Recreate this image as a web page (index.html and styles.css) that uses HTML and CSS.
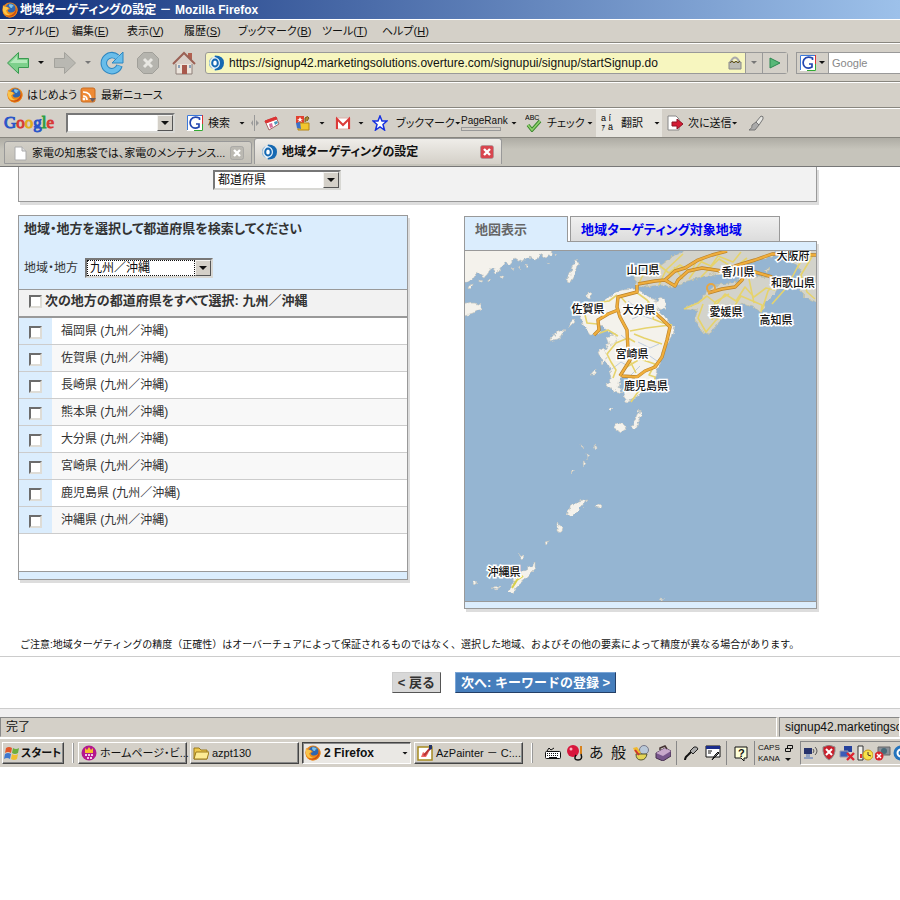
FILE: index.html
```html
<!DOCTYPE html>
<html lang="ja">
<head>
    <meta charset="UTF-8">
    <meta name="viewport" content="width=device-width, initial-scale=1.0">
    <title>地域ターゲティングの設定 - Mozilla Firefox</title>
    <link rel="stylesheet" href="styles.css">
</head>
<body>
    <svg class="defs" width="0" height="0">
        <symbol id="firefox" viewBox="0 0 16 16">
            <circle cx="8" cy="8" r="7.5" fill="#e8861c"/>
            <circle cx="8.500" cy="6.500" r="5" fill="#2f66b0"/>
            <path d="M7 2.500q3-1 5 1.500q-2 0-2 2q-3 0-3-3.500" fill="#7fc3e8"/>
            <path d="M1 3l2 1.500l3 .5l2 2-2.500 1 1 2q3 1.500 6.500-1q2-3 .5-6.500q2.500 3 2 6.500q-2 6.500-8 6.500q-7-1-7-8z" fill="#ef8a17"/>
            <path d="M1 4q2 1 4 1l1.500 1.500-2.500 2q1 4 5 4.500q-6 1.500-8-4z" fill="#f9c44a"/>
            <path d="M14 5q2 6-3 9q-5 2-8-1q6 2 9-2q2-3 2-6" fill="#c94d14"/>
        </symbol>
        <symbol id="overture" viewBox="0 0 16 16">
            <ellipse cx="7" cy="8" rx="5.500" ry="7" fill="#e4f0fa"/>
            <path d="M6 .5q9 0 9 7.500t-9 7.500q-1-1 0-1.500q5-1.500 5-6T6 2q-1-.5 0-1.500" fill="#1669b2"/>
            <ellipse cx="6" cy="8" rx="2.800" ry="3.500" fill="#fff" stroke="#1669b2" stroke-width="2"/>
            <path d="M3 2.500Q0 5 0 8t3 5.500" fill="none" stroke="#8fb8dc"/>
        </symbol>
        <symbol id="google-g" viewBox="0 0 16 16">
            <path d="M0 0h16v16H0z" fill="#fff"/>
            <path d="M.5 15V.5H15" fill="none" stroke="#3c78d8"/>
            <path d="M15.500 0v9" stroke="#d33"/>
            <path d="M15.500 9v6.500H7" fill="none" stroke="#3a3"/>
            <path d="M12.500 5V3q-6-2.500-8.500 1.500q-2 4 .5 7q3 3 7.500.5V9H9" fill="none" stroke="#2346b0" stroke-width="1.700"/>
        </symbol>
        <symbol id="closex" viewBox="0 0 14 14">
            <rect x=".5" y=".5" width="13" height="13" rx="2" fill="currentColor" stroke="#999" stroke-opacity=".6"/>
            <path d="M4 4l6 6M10 4l-6 6" stroke="#fff" stroke-width="2.400"/>
        </symbol>
    </svg>

    <header class="titlebar">
        <svg class="icon"><use href="#firefox"/></svg>
        <span>地域ターゲティングの設定 － Mozilla Firefox</span>
    </header>

    <nav class="menubar">
        <a href="#">ファイル(<u>F</u>)</a>
        <a href="#">編集(<u>E</u>)</a>
        <a href="#">表示(<u>V</u>)</a>
        <a href="#">履歴(<u>S</u>)</a>
        <a href="#">ブックマーク(<u>B</u>)</a>
        <a href="#">ツール(<u>T</u>)</a>
        <a href="#">ヘルプ(<u>H</u>)</a>
    </nav>

    <div class="navbar">
        <button class="plain" aria-label="戻る">
            <svg width="24" height="24" viewBox="0 0 24 24"><path d="M1.500 12L12.500 1.500v6h10v9h-10v6z" fill="#7ed08c" stroke="#3a9a50"/><path d="M4 12l7-7v4h10v3z" fill="#b5e9bb"/></svg>
        </button>
        <i class="arrow"></i>
        <button class="plain" aria-label="進む">
            <svg width="24" height="24" viewBox="0 0 24 24"><path d="M22.500 12L11.500 1.500v6h-10v9h10v6z" fill="#b9b8b2" stroke="#a3a29c"/></svg>
        </button>
        <i class="arrow dim"></i>
        <button class="plain" aria-label="更新">
            <svg width="24" height="24" viewBox="0 0 24 24"><path d="M19.500 14.500A8 8 0 1 1 17 6" fill="none" stroke="#2d86c0" stroke-width="6.500"/><path d="M23 1v11H12z" fill="#69bdea" stroke="#2d86c0"/><path d="M19.300 15A8 8 0 1 1 17.500 6.500" fill="none" stroke="#69bdea" stroke-width="4.500"/></svg>
        </button>
        <button class="plain" aria-label="中止">
            <svg width="24" height="24" viewBox="0 0 24 24"><path d="M7.500 1.500h9l6 6v9l-6 6h-9l-6-6v-9z" fill="#b5b4ae" stroke="#a09f99"/><path d="M8 8l8 8M16 8l-8 8" stroke="#e8e7e2" stroke-width="3"/></svg>
        </button>
        <button class="plain" aria-label="ホーム">
            <svg width="24" height="24" viewBox="0 0 24 24"><path d="M4 11h16v12H4z" fill="#ece4dc" stroke="#8d7f78"/><path d="M16 2h4v7h-4z" fill="#b06050"/><path d="M1 13L12 2l11 11" fill="#d9cfc8" stroke="#9b6155" stroke-width="2"/><path d="M10 14h5v9h-5z" fill="#a8584c"/><path d="M6 14h2v3H6zM17 14h2v3h-2z" fill="#8aa0b8"/></svg>
        </button>
        <div class="urlbar">
            <svg class="icon"><use href="#overture"/></svg>
            <input type="text" aria-label="アドレス" value="https://signup42.marketingsolutions.overture.com/signupui/signup/startSignup.do">
            <svg width="14" height="14" viewBox="0 0 14 14"><path d="M3 8V5q4-7 8 0v3" fill="none" stroke="#aaa" stroke-width="2"/><path d="M1 6h12v7H1z" fill="#bcbcb4" stroke="#888"/><path d="M2 7l2-2 2 2 2-2 2 2 2-2" fill="none" stroke="#665a20"/></svg>
            <button class="urldrop" aria-label="履歴"><i class="arrow dim"></i></button>
            <button class="go" aria-label="移動"><svg width="12" height="12" viewBox="0 0 12 12"><path d="M1 1l10 5-10 5z" fill="#58b878" stroke="#2d8850"/></svg></button>
        </div>
        <div class="search">
            <button class="engine" aria-label="検索エンジン"><svg class="icon"><use href="#google-g"/></svg><i class="arrow"></i></button>
            <input type="text" aria-label="検索" placeholder="Google">
        </div>
    </div>

    <div class="bookmarks">
        <svg class="icon"><use href="#firefox"/></svg>
        <a href="#">はじめよう</a>
        <svg class="icon" viewBox="0 0 16 16"><rect x="1" y="1" width="14" height="14" rx="2" fill="#ee8a35" stroke="#c96c22"/><path d="M3 5q8 0 8 8M3 9q4 0 4 4" fill="none" stroke="#fff" stroke-width="1.700"/><circle cx="4" cy="12" r="1.400" fill="#fff"/><path d="M9 11h7l-3.500 4z" fill="#6a5c60"/></svg>
        <a href="#">最新ニュース</a>
    </div>

    <div class="gtoolbar">
        <span class="glogo"><b class="gb">G</b><b class="gr">o</b><b class="gy">o</b><b class="gb">g</b><b class="gg">l</b><b class="gr">e</b></span>
        <div class="combo gcombo"><input type="text" aria-label="Google 検索"><span class="knob"><i class="arrow"></i></span></div>
        <svg class="icon"><use href="#google-g"/></svg>
        <span>検索</span>
        <i class="arrow"></i>
        <svg width="8" height="16" viewBox="0 0 8 16"><path d="M3.500 0v16" stroke="#999"/><path d="M2 5v6L0 8zM5 5v6l3-3z" fill="#999"/></svg>
        <svg class="icon" viewBox="0 0 16 16"><path d="M1 6l11-4 3 7-10 6z" fill="#fff" stroke="#a66"/><path d="M1 6l11-4 1 2-11 4z" fill="#d33" stroke="#d33"/><path d="M5 9l3-1 1 4-3 1z" fill="#d86b9a"/><path d="M10 7l3-1 1 2-3 2z" fill="#49b"/></svg>
        <svg class="icon" viewBox="0 0 16 16"><path d="M1 1h8v7H1z" fill="#e2412f"/><path d="M3 8h11v7H3z" fill="#f1c62e" stroke="#b68615"/><path d="M1 8l4-1 1 7-4-1z" fill="#3b70c8"/><path d="M5 2l1 2h2l-2 1 1 2-2-1-2 1 1-2-2-1h2z" fill="#fff"/><path d="M10 7V3q3-3 4 0l-2 3" fill="#ad8c32" stroke="#75581e"/></svg>
        <i class="arrow"></i>
        <svg class="icon" viewBox="0 0 16 16"><path d="M1 3h14v11H1z" fill="#fff" stroke="#ddb0a8"/><path d="M2 14V4l6 6 6-6v10" fill="none" stroke="#dc3a38" stroke-width="2"/></svg>
        <i class="arrow"></i>
        <svg class="icon" viewBox="0 0 16 16"><path d="M8 1l2 5h5l-4 3.500 1.500 5.500L8 12l-4.500 3L5 9.500 1 6h5z" fill="#fff" stroke="#1530e0" stroke-width="1.500"/></svg>
        <span class="withdrop">ブックマーク<i class="arrow"></i></span>
        <span class="pagerank">PageRank<i></i></span>
        <i class="arrow"></i>
        <svg width="18" height="18" viewBox="0 0 18 18"><text x="0" y="6" font-size="7">ABC</text><path d="M3 11l4 5 8-9" fill="none" stroke="#39862c" stroke-width="3.500"/><path d="M3 11l4 5 8-9" fill="none" stroke="#8fd16c" stroke-width="1.700"/></svg>
        <span>チェック</span>
        <i class="arrow"></i>
        <button class="plain translate">
            <svg width="18" height="20" viewBox="0 0 18 20"><text x="1" y="8" font-size="9">a í</text><text x="1" y="17" font-size="9">ｧ ä</text></svg>
            翻訳<i class="arrow"></i>
        </button>
        <svg class="icon" viewBox="0 0 16 16"><path d="M1 1h8l3 3v11H1z" fill="#fff" stroke="#888"/><path d="M5 7h5V4l6 5-6 5v-3H5z" fill="#d41c35" stroke="#8e1426"/></svg>
        <span class="withdrop">次に送信<i class="arrow"></i></span>
        <svg class="icon" viewBox="0 0 16 16"><path d="M8 7l5-6q3 0 2 3l-4 6z" fill="#e6e6e2" stroke="#777"/><path d="M8 7l3 3-4 5H1q4-2 3-5z" fill="#aaa" stroke="#777"/></svg>
    </div>

    <div class="tabs">
        <div class="tab">
            <svg class="icon" viewBox="0 0 16 16"><path d="M3 2h7l4 4v9H3z" fill="#fff" stroke="#aaa"/><path d="M10 2v4h4" fill="#ddd" stroke="#aaa"/></svg>
            <a href="#">家電の知恵袋では、家電のメンテナンス...</a>
            <button class="plain close" aria-label="閉じる"><svg width="14" height="14"><use href="#closex"/></svg></button>
        </div>
        <div class="tab active">
            <svg class="icon"><use href="#overture"/></svg>
            <a href="#">地域ターゲティングの設定</a>
            <button class="plain close" aria-label="閉じる"><svg width="14" height="14"><use href="#closex"/></svg></button>
        </div>
    </div>

    <main class="page">
        <div class="content">
            <section class="box unit">
                <div class="combo wide">
                    <select aria-label="単位"><option>都道府県</option></select><span class="knob"><i class="arrow"></i></span>
                </div>
            </section>

            <div class="columns">
                <section class="box picker">
                    <div class="picker-head">
                        <h2>地域・地方を選択して都道府県を検索してください</h2>
                        <div class="field">
                            <label for="region">地域・地方</label>
                            <div class="combo wide focused">
                                <select id="region"><option>九州／沖縄</option></select><span class="knob"><i class="arrow"></i></span>
                            </div>
                        </div>
                    </div>
                    <div class="select-all">
                        <input type="checkbox" id="all">
                        <label for="all">次の地方の都道府県をすべて選択: 九州／沖縄</label>
                    </div>
                    <table class="prefs">
                        <tr><td><input type="checkbox" id="p1"></td><td><label for="p1">福岡県 (九州／沖縄)</label></td></tr>
                        <tr><td><input type="checkbox" id="p2"></td><td><label for="p2">佐賀県 (九州／沖縄)</label></td></tr>
                        <tr><td><input type="checkbox" id="p3"></td><td><label for="p3">長崎県 (九州／沖縄)</label></td></tr>
                        <tr><td><input type="checkbox" id="p4"></td><td><label for="p4">熊本県 (九州／沖縄)</label></td></tr>
                        <tr><td><input type="checkbox" id="p5"></td><td><label for="p5">大分県 (九州／沖縄)</label></td></tr>
                        <tr><td><input type="checkbox" id="p6"></td><td><label for="p6">宮崎県 (九州／沖縄)</label></td></tr>
                        <tr><td><input type="checkbox" id="p7"></td><td><label for="p7">鹿児島県 (九州／沖縄)</label></td></tr>
                        <tr><td><input type="checkbox" id="p8"></td><td><label for="p8">沖縄県 (九州／沖縄)</label></td></tr>
                    </table>
                    <div class="picker-foot"></div>
                </section>

                <section class="mapcol">
                    <div class="maptabs">
                        <a href="#" class="maptab current">地図表示</a>
                        <a href="#" class="maptab">地域ターゲティング対象地域</a>
                    </div>
                    <div class="box mapbox">
                        <svg class="map" viewBox="0 0 351 350">
                            <defs>
                                <filter id="coast" filterUnits="userSpaceOnUse" x="-5" y="-5" width="365" height="365" color-interpolation-filters="sRGB">
                                    <feTurbulence type="fractalNoise" baseFrequency=".2" numOctaves="2" seed="4"/>
                                    <feDisplacementMap in="SourceGraphic" scale="6" xChannelSelector="R" yChannelSelector="G"/>
                                </filter>
                            </defs>
                            <!-- land -->
                            <g fill="#f4f2ec" stroke="#c9c6bb" stroke-width=".6" filter="url(#coast)">
                                <path d="M-3-3H87L86 3 81 7 76 4 70 9 64 5 57 11 50 7 44 14 40 12 32 23 27 16 20 26 13 21 8 29-3 32z"/>
                                <path d="M90 3l3 1-2 2zM60 14l3 1-2 2zM46 17l3-1-1 3zM35 25l3 0-2 3zM24 28l2 1-2 2zM14 29l3 1-3 2zM4 35l4-1-3 3zM82 11l3 1-2 1zM54 15l2 1-1 2z"/>
                                <path d="M-3 54L8 52 17 54 14 59 7 63-3 66z"/>
                                <path d="M110 9l4 2-3 10-6 10-4-1 4-9z"/>
                                <path d="M172 38L183 46 192 50 192 58 197 63 203 71 210 76 207 86 200 96 195 109 192 122 190 129 181 136 173 146 162 151 158 146 165 135 163 127 156 126 154 137 158 142 147 140 142 134 147 126 143 112 136 103 143 93 153 89 147 83 139 77 134 72 136 83 124 83 119 76 116 66 116 56 130 52 143 49 150 42 157 39z"/>
                                <path d="M142 86l8-3 3 6-8 5zM133 100l5-3 5 8-5 8z"/>
                                <circle cx="196" cy="53" r="5.500"/>
                                <path d="M91 82l10-5-6 10-10 3zM104 72l4-4 2 3-5 5z"/>
                                <path d="M122 42l4 1-1 4-3-1zM125 124l6-7-1 7z"/>
                                <path d="M174 159l3 5-6 13-4-1 4-10z"/>
                                <path d="M148 177l4-5 7 1 2 5-6 4z"/>
                                <path d="M123 248l-7 8-9 9-5-1 4-10 8-4z"/>
                                <path d="M133 253l3 1-2 4-3-2zM92 272l5 4-1 6-4-2zM79 291l6-1-5 4z"/>
                                <path d="M70 312v6l-9 9-7 6-6 10-5-2 7-14z"/>
                                <path d="M8 330l6 1-4 3zM27 337l9-1-5 3zM54 305l4-2-1 6z"/>
                                <path d="M129 194l3 2-1 3zM122 203l3 2-2 4zM117 211l3 1-2 3zM107 219l3 1-3 3zM144 158l5-1-3 3zM116 193l2 1-1 2zM194 347l4 1-3 1z"/>
                            </g>
                            <g fill="#d3d3cb" stroke="#c6c1a0" stroke-width=".7" filter="url(#coast)">
                                <path d="M170 34L171 24 182 17 195 14 205 7 222-3H314L306 6 290 10 280 14 270 20 255 23 235 27 222 30 210 36 195 34 180 36z"/>
                                <path d="M354-3V52L342 47 335 40 332 32 336 18 325 8 320-3z"/>
                                <path d="M240 42L250 34 273 31 280 24 307 26 317 32 310 42 300 52 297 62 287 56 277 52 267 59 253 72 245 84 235 79 230 69 232 59 220 57 237 49z"/>
                                <path d="M299 20l5-4-1 6zM260 24l8-2-4 4zM245 22l5-1-2 3z"/>
                            </g>
                            <!-- rivers -->
                            <g fill="none" stroke="#a8bcd8" stroke-width=".7">
                                <path d="M163 50q8 8 18 7M167 68l9-4 11 4M173 91l12 6 9-4M170 108l12-5 10 7M147 118l9-7 5 3M166 124l9-9M156 84l7 6"/>
                            </g>
                            <!-- minor roads -->
                            <g fill="none" stroke="#e6d36c" stroke-width="1.600" stroke-linejoin="round">
                                <path d="M155 45l8 9M171 41l11 8 8 10-2 9 10 4 9 2M165 80l16-3 24-3M169 83l10 4 18 6M170 91l-7-4-12 5-9 11 4 8 5 8-3 8M160 117l15-9 15 5-6 11 6 2-1 8-14 4-9 13M116 57l13-5 15-2 8-6M119 60l3 12 10 1M135 82l8-3 10 6M184 50l-9 14-14-3M165 110l6 12"/>
                                <path d="M174 32l7-14 14-3 9 7 11-8 11 7 6-12 14 6 7-10 15 6 8-10M194 34l7-15 17-16M224 28l14-20M236 26l18-18 20 12M253 22l15-4 14-11M218 28l-9-12"/>
                                <path d="M219 58l14-6 9-7 10 8 8-10 11 7 9-14 9 10 12-9 9 2M238 53l-5 14 8 14 10-12 16-10 9-14 21 9-1 7M247 69l3-18 14-8M284 28l5 24M297 59l6-19 8-9M341 2l-9 15-10 19-15 17M348 4l-12 20 6 17 8 7"/>
                            </g>
                            <!-- expressways -->
                            <g fill="none" stroke="#b9822b" stroke-width="3.400" stroke-linejoin="round">
                                <path d="M173 33L190 30 200 29 210 20 220 17 233 9 247 4 262 0M200 29L210 35 213 29 223 20 237 17 257 20 270 15 290 9 307 3 351 4M172 34V41L153 46 152 56 155 66 162 79 163 99 165 109 155 125M153 59L143 63 133 69 134 79 129 84M188 60L198 69 205 76 202 89 197 106 190 116 180 120 172 126 157 125M243 42L257 38 270 36 277 29 280 22 290 21 307 26"/>
                            </g>
                            <g fill="none" stroke="#f0ae3c" stroke-width="2.200" stroke-linejoin="round">
                                <path d="M173 33L190 30 200 29 210 20 220 17 233 9 247 4 262 0M200 29L210 35 213 29 223 20 237 17 257 20 270 15 290 9 307 3 351 4M172 34V41L153 46 152 56 155 66 162 79 163 99 165 109 155 125M153 59L143 63 133 69 134 79 129 84M188 60L198 69 205 76 202 89 197 106 190 116 180 120 172 126 157 125M243 42L257 38 270 36 277 29 280 22 290 21 307 26"/>
                            </g>
                            <circle cx="246" cy="37" r="4" fill="none" stroke="#e8a641" stroke-width="2"/>
                            <path d="M47 337l5-8 6-4" fill="none" stroke="#d8d04c" stroke-width="2"/>
                            <g class="maplabels">
                                <text x="328" y="9">大阪府</text>
                                <text x="178" y="23">山口県</text>
                                <text x="273" y="25">香川県</text>
                                <text x="328" y="36">和歌山県</text>
                                <text x="123" y="62">佐賀県</text>
                                <text x="174" y="63">大分県</text>
                                <text x="261" y="65">愛媛県</text>
                                <text x="311" y="73">高知県</text>
                                <text x="167" y="107">宮崎県</text>
                                <text x="181" y="139">鹿児島県</text>
                                <text x="39" y="325">沖縄県</text>
                            </g>
                        </svg>
                    </div>
                </section>
            </div>
            <p class="note">ご注意:地域ターゲティングの精度（正確性）はオーバーチュアによって保証されるものではなく、選択した地域、およびその他の要素によって精度が異なる場合があります。</p>
        </div>
        <div class="actions">
            <button class="back">&lt; 戻る</button>
            <button class="next">次へ: キーワードの登録 &gt;</button>
        </div>
    </main>

    <footer class="statusbar">
        <span>完了</span>
        <span>signup42.marketingsolutions.overture.com</span>
    </footer>

    <div class="taskbar">
        <button class="task start">
            <svg class="icon" viewBox="0 0 16 16"><path d="M2 3q3-2 6 0L7 8q-3-2-6 0z" fill="#e2572b"/><path d="M9 3q3 2 6 0l-1 5q-3 2-6 0z" fill="#6cae3e"/><path d="M1 9q3-2 6 0l-1 5q-3-2-6 0z" fill="#3f78cf"/><path d="M8 9q3 2 6 0l-1 5q-3 2-6 0z" fill="#f0bf30"/></svg>
            スタート
        </button>
        <i class="grip"></i>
        <button class="task">
            <svg class="icon" viewBox="0 0 16 16"><circle cx="8" cy="8" r="7.500" fill="#b5178e"/><path d="M4 3l2 2 2-3 2 3 2-2v5H4z" fill="#f6bf2d"/><path d="M4 9h2v2H4zM7 9h2v2H7zM10 9h2v2h-2zM6 12h2v2H6zM9 12h2v2H9z" fill="#f3c8ea"/></svg>
            <span>ホームページ・ビ...</span>
        </button>
        <button class="task">
            <svg class="icon" viewBox="0 0 16 16"><path d="M1 3h5l2 2h6v9H1z" fill="#eec84c" stroke="#9b7a1c"/><path d="M3 7h13l-2 7H1z" fill="#fdeb94" stroke="#9b7a1c"/></svg>
            <span>azpt130</span>
        </button>
        <button class="task pressed">
            <svg class="icon"><use href="#firefox"/></svg>
            <span>2 Firefox</span><i class="arrow"></i>
        </button>
        <button class="task">
            <svg class="icon" viewBox="0 0 16 16"><path d="M1 2h14v13H1z" fill="#fff" stroke="#a68a20" stroke-width="1.500"/><path d="M4 12l2-5 3 2 3-2-3 5z" fill="#e66"/><path d="M6 10l6-7 2 1-6 7z" fill="#b33"/><path d="M12 0h3v4l-3 1z" fill="#236"/></svg>
            <span>AzPainter － C:...</span>
        </button>
        <i class="grip"></i>
        <div class="ime">
            <svg class="icon" viewBox="0 0 16 16"><path d="M2 6l2-3 2 2 3-2" fill="none" stroke="#111"/><rect x=".5" y="6.500" width="15" height="7" rx="1" fill="#fff" stroke="#111"/><path d="M2 8.500h12M2 10.500h12" stroke="#111" stroke-dasharray="1 1"/><path d="M4 12.500h8" stroke="#111"/></svg>
            <svg class="icon" viewBox="0 0 16 16"><circle cx="6" cy="6" r="6" fill="#d8163c"/><circle cx="4" cy="4" r="1.500" fill="#ffb0bd"/><path d="M14 1v8" stroke="#d8821d" stroke-width="2"/><path d="M9 10q-3 5 2 5t3-6" fill="none" stroke="#111" stroke-width="1.500"/></svg>
            <span class="mode">あ</span>
            <span class="mode">般</span>
            <svg class="icon" viewBox="0 0 16 16"><circle cx="11" cy="5" r="4.500" fill="#b9c8d8" stroke="#778"/><path d="M0 3l4-1 4 6-4 3z" fill="#f0b92c"/><path d="M3 9h11q-1 6-6 6T3 9" fill="#e3d456" stroke="#553"/><path d="M2 5l4 5" stroke="#c33" stroke-width="2"/></svg>
            <svg class="icon" viewBox="0 0 16 16"><path d="M1 8l9-5 6 3v5l-8 5-7-3z" fill="#78568c" stroke="#46304f"/><path d="M1 8l9-5 6 3-8 5z" fill="#c8a8cc"/><path d="M5 5V3l5-2 2 3" fill="none" stroke="#433" stroke-width="1.500"/></svg>
        </div>
        <div class="ime">
            <svg class="icon" viewBox="0 0 16 16"><path d="M2 15q0-3 3-5l3-3" fill="none" stroke="#111" stroke-width="2"/><path d="M7 6l4-4q3-1 4 2l-5 5z" fill="#aaa" stroke="#222"/></svg>
            <svg class="icon" viewBox="0 0 16 16"><path d="M1 1h14v11H1z" fill="#fff" stroke="#111"/><path d="M1 1h14v3H1z" fill="#1b2d8c"/><path d="M3 6h4M3 8h3" stroke="#111"/><path d="M7 15l3-5 3-3 1 1-3 3z" fill="#888" stroke="#111"/></svg>
        </div>
        <div class="ime">
            <svg class="icon" viewBox="0 0 16 16"><path d="M2 2h12v11h-3v3l-3-3H2z" fill="#ffffd8" stroke="#111"/><text x="5" y="12" font-size="11" font-weight="bold" fill="#111">?</text></svg>
        </div>
        <div class="keys"><span>CAPS</span><span>KANA</span></div>
        <div class="imemenu">
            <svg width="8" height="7" viewBox="0 0 8 7"><path d="M2.500.5h5v3h-5zM.5 3.500h5v3h-5z" fill="#d4d0c8" stroke="#111"/></svg>
            <i class="arrow"></i>
        </div>
        <div class="tray">
            <svg class="icon" viewBox="0 0 16 16"><path d="M1 3h8v6H1z" fill="#26336c"/><path d="M3 9h4v3H3zM1 12h9v2H1z" fill="#8fa0c0"/><path d="M10 4q2 2 0 4M12 2q4 4 0 8" fill="none" stroke="#555"/></svg>
            <svg class="icon" viewBox="0 0 16 16"><path d="M8 0l6 2q1 9-6 13Q1 11 2 2z" fill="#c9202c" stroke="#8b8b8b"/><path d="M5 4l6 6M11 4l-6 6" stroke="#fff" stroke-width="2"/></svg>
            <svg class="icon" viewBox="0 0 16 16"><path d="M5 1h8v6H5z" fill="#26429c"/><path d="M1 6h8v6H1z" fill="#3c5cb8" stroke="#99a"/><path d="M8 8l7 7M15 8l-7 7" stroke="#dc2330" stroke-width="2.400"/></svg>
            <svg class="icon" viewBox="0 0 16 16"><path d="M1 1h5v14H1z" fill="#f2f2ee" stroke="#333"/><path d="M3 9h2v4H3z" fill="#d33"/><circle cx="11" cy="10" r="5" fill="#f7e34a" stroke="#cb9a18"/><path d="M11 7v3l3 1" fill="none" stroke="#433"/></svg>
            <svg class="icon" viewBox="0 0 16 16"><path d="M3 2h12v8H3z" fill="#888f98" stroke="#666"/><circle cx="9" cy="6" r="3" fill="#486a78"/><circle cx="4" cy="11" r="4.500" fill="#d8242c"/><path d="M2 9l4 4M6 9l-4 4" stroke="#fff" stroke-width="1.500"/></svg>
            <svg class="icon" viewBox="0 0 16 16"><circle cx="8" cy="8" r="7.500" fill="#2474bd"/><circle cx="8" cy="8" r="3.500" fill="none" stroke="#fff" stroke-width="2"/></svg>
        </div>
    </div>
</body>
</html>
```

FILE: styles.css
```css
* {
    box-sizing: border-box;
}
body {
    margin: 0;
    background: #fff;
    color: #111;
    font-family: "Liberation Sans", "Noto Sans CJK JP", sans-serif;
    font-size: 12px;
    line-height: 16px;
    font-feature-settings: "palt";
    overflow-x: hidden;
}
.defs {
    display: block;
}
a {
    color: inherit;
    text-decoration: none;
}
input, select, button {
    font: inherit;
    font-feature-settings: inherit;
    color: inherit;
}
.icon {
    width: 16px;
    height: 16px;
    flex: none;
}
.plain {
    display: flex;
    padding: 0;
    border: 0;
    background: none;
}
.arrow {
    width: 6px;
    height: 3px;
    flex: none;
    background: #111;
    clip-path: polygon(0 0, 100% 0, 50% 100%);
}
.arrow.dim {
    background: #777;
}

/* window chrome */
.titlebar {
    display: flex;
    align-items: center;
    gap: 2px;
    height: 19px;
    padding-left: 2px;
    background: linear-gradient(to right, #12317c, #9dc1ea);
    color: #fff;
    font-weight: bold;
    white-space: nowrap;
}
.menubar, .navbar, .bookmarks, .gtoolbar {
    align-items: center;
    background: #d4d0c8;
    border-top: 1px solid #fff;
    border-bottom: 1px solid #88867f;
    white-space: nowrap;
}
.menubar, .bookmarks, .gtoolbar {
    font-size: 11px;
}
.menubar {
    display: grid;
    grid-template-columns: 65px 55px 57px 54px 84px 60px auto;
    height: 24px;
    padding-left: 7px;
}
.navbar {
    display: grid;
    grid-template-columns: 32px 15px 32px 15px 36px 36px 33px 583px auto;
    height: 39px;
    padding-left: 6px;
}
.urlbar {
    display: flex;
    align-items: center;
    height: 22px;
    border: 1px solid #999;
    border-radius: 3px;
    background: #f7f6bf;
    padding-left: 3px;
}
.urlbar input {
    flex: 1;
    min-width: 0;
    border: 0;
    padding: 0 4px;
    background: none;
}
.urldrop, .go {
    display: flex;
    align-items: center;
    justify-content: center;
    height: 20px;
    padding: 0;
    border: 0;
    border-left: 1px solid #999;
    background: #d4d0c8;
}
.urldrop {
    width: 17px;
    margin-left: 3px;
}
.go {
    width: 25px;
}
.search {
    display: flex;
    height: 22px;
    margin-left: 8px;
    border: 1px solid #999;
    border-right: 0;
    background: #fff;
}
.search input {
    flex: 1;
    min-width: 0;
    border: 0;
    padding: 0 3px;
    font-size: 11px;
}
.search input::placeholder {
    color: #888;
}
.engine {
    display: flex;
    align-items: center;
    gap: 3px;
    padding: 0 3px;
    border: 0;
    border-right: 1px solid #999;
    background: #d4d0c8;
}
.bookmarks {
    display: grid;
    grid-template-columns: 20px 53px 21px auto;
    height: 26px;
    padding-left: 7px;
}
.gtoolbar {
    display: grid;
    grid-template-columns: 62px 121px 21px 31px 12px 13px 31px 24px 16px 23px 14px 24px 65px 50px 14px 22px 40px 9px 71px 21px 60px auto;
    height: 30px;
    padding-left: 4px;
}
.glogo {
    font-family: "Liberation Serif", serif;
    font-size: 17px;
    line-height: 20px;
}
.glogo b {
    font-weight: normal;
}
.gb { color: #2a55c8; }
.gr { color: #d83a35; }
.gy { color: #e2ac1c; }
.gg { color: #2f9e44; }
.glogo b {
    -webkit-text-stroke: 1px;
}
.withdrop {
    display: flex;
    align-items: center;
}
.pagerank {
    font-size: 10px;
    line-height: 10px;
}
.pagerank i {
    display: block;
    width: 40px;
    height: 4px;
    margin-top: 1px;
    border: 1px solid #999;
}
.translate {
    align-items: center;
    gap: 3px;
    width: 66px;
    height: 28px;
    padding-left: 4px;
    background: #e8e6e0;
}
.translate .arrow {
    margin-left: 8px;
}

.tabs {
    display: flex;
    align-items: flex-end;
    gap: 2px;
    height: 29px;
    padding: 0 4px 2px;
    background: linear-gradient(#aeaca4, #c6c4bb 40%, #c6c4bb);
    border-bottom: 1px solid #777;
}
.tab {
    display: flex;
    align-items: center;
    gap: 4px;
    width: 248px;
    height: 23px;
    padding: 0 7px;
    border: 1px solid #999;
    border-radius: 3px 3px 0 0;
    background: linear-gradient(#d2cfc7, #c3c0b7);
    font-size: 11px;
    white-space: nowrap;
}
.tab a {
    flex: 1;
}
.tab .close {
    color: #bbb9b2;
}
.tab.active {
    height: 26px;
    border-bottom: 0;
    background: linear-gradient(#efede9, #d4d0c8);
    font-size: 12px;
    font-weight: bold;
}
.tab.active .close {
    color: #d8454e;
}

/* form parts */
.combo {
    display: flex;
    height: 20px;
    background: #fff;
    border: 2px solid;
    border-color: #777 #d8d8d4 #d8d8d4 #777;
}
.combo input, .combo select {
    flex: 1;
    min-width: 0;
    appearance: none;
    border: 0;
    padding: 0 3px;
    background: none;
    outline: 0;
}
.combo.focused select {
    outline: 1px dotted #111;
    outline-offset: -1px;
}
.gcombo {
    width: 109px;
}
.wide {
    width: 128px;
}
.knob {
    display: flex;
    align-items: center;
    justify-content: center;
    width: 16px;
    background: #d4d0c8;
    border: 1px solid;
    border-color: #f4f3f0 #555 #555 #f4f3f0;
    pointer-events: none;
}
.knob .arrow {
    width: 8px;
    height: 4px;
}
input[type="checkbox"] {
    appearance: none;
    display: block;
    width: 13px;
    height: 13px;
    margin: 0;
    background: #fff;
    border: 2px solid;
    border-color: #6c6c6c #dedcd6 #dedcd6 #6c6c6c;
}

/* page */
.page {
    border-bottom: 1px solid #ccc;
    color: #333;
}
.content {
    max-width: 817px;
    padding-left: 18px;
}
.box {
    border: 1px solid #999;
    box-shadow: 2px 3px 0 #ddd;
}
.unit {
    height: 35px;
    padding: 3px 0 0 194px;
    border-top: 0;
    background: #f2f2f2;
    color: #111;
}
.columns {
    display: grid;
    grid-template-columns: 390fr 353fr;
    gap: 56px;
    align-items: start;
    margin-top: 13px;
}
.picker-head {
    height: 74px;
    padding: 5px;
    background: #dbedfd;
    border-bottom: 1px solid #999;
}
h2 {
    margin: 0 0 21px;
    font-size: 13px;
    line-height: 16px;
    white-space: nowrap;
}
.field {
    display: flex;
    align-items: center;
    gap: 7px;
}
.field .combo {
    color: #111;
}
.select-all {
    display: flex;
    align-items: center;
    gap: 3px;
    height: 28px;
    padding: 0 10px 4px;
    background: #f2f2f2;
    border-bottom: 2px solid #999;
    font-size: 13px;
    font-weight: bold;
    white-space: nowrap;
}
.prefs {
    width: 100%;
    border-spacing: 0;
}
.prefs td {
    height: 27px;
    padding: 0 9px;
    border-bottom: 1px solid #ccc;
}
.prefs td:first-child {
    width: 33px;
    padding: 2px 10px 0;
    background: #dbedfd;
}
.prefs tr:nth-child(even) {
    background: #f8f8f8;
}
.picker-foot {
    height: 45px;
    border-bottom: 7px solid #dbedfd;
    box-shadow: inset 0 -1px 0 #999;
}
.maptabs {
    display: flex;
    align-items: flex-end;
    gap: 2px;
    height: 25px;
    margin-top: 1px;
}
.maptab {
    height: 25px;
    padding: 4px 37px 0 10px;
    border: 1px solid #999;
    border-bottom: 0;
    background: linear-gradient(#f0f0f0, #dcdcdc);
    color: #00e;
    font-size: 13px;
    line-height: 18px;
    font-weight: bold;
    white-space: nowrap;
}
.maptab.current {
    position: relative;
    z-index: 1;
    background: #dbedfd;
    color: #666;
    margin-bottom: -1px;
    height: 26px;
    padding-right: 40px;
}
.mapbox {
    padding: 9px 0 7px;
    background: #dbedfd;
}
.map {
    display: block;
    width: 100%;
    background: #95b5d2;
    outline: 1px solid #999;
}
.maplabels {
    font-size: 11px;
    fill: #111;
    stroke: #fff;
    stroke-width: 3px;
    paint-order: stroke;
    font-weight: 500;
    text-anchor: middle;
}
.note {
    margin: 28px 0 0 2px;
    color: #111;
    font-size: 10px;
    font-feature-settings: normal;
    white-space: nowrap;
}
.actions {
    display: flex;
    justify-content: center;
    gap: 14px;
    height: 52px;
    margin-top: 3px;
    padding: 15px 0 0 108px;
    border-top: 1px solid #ccc;
}
.actions button {
    height: 21px;
    padding: 0 5px;
    border: 1px solid;
    border-color: #ccc #555 #555 #ccc;
    background: #d8d8d8;
    font-size: 13px;
    line-height: 18px;
    font-weight: bold;
    font-feature-settings: normal;
}
.actions .next {
    background: #467ebc;
    border-color: #7aa5d6 #243f66 #243f66 #7aa5d6;
    color: #fff;
}

/* status bar and task bar */
.statusbar {
    display: grid;
    grid-template-columns: 1fr 121px;
    gap: 2px;
    height: 29px;
    border-top: 8px solid #f0eff0;
    border-bottom: 1px solid #fff;
    background: #d4d0c8;
    line-height: 19px;
}
.statusbar span {
    padding-left: 5px;
    border: 1px solid;
    border-color: #888 #fff #d4d0c8 #888;
    overflow: hidden;
    white-space: nowrap;
}
.taskbar {
    display: flex;
    align-items: center;
    gap: 3px;
    height: 29px;
    padding-left: 2px;
    background: #d4d0c8;
    border-top: 1px solid #fff;
}
.task {
    display: flex;
    align-items: center;
    gap: 3px;
    flex: none;
    width: 109px;
    height: 22px;
    padding: 0 2px;
    border: 1px solid;
    border-color: #fff #444 #444 #fff;
    box-shadow: inset -1px -1px 0 #888;
    background: #d4d0c8;
    font-size: 11px;
    white-space: nowrap;
}
.task.start {
    width: 62px;
    gap: 1px;
    padding: 0 1px;
    font-weight: bold;
}
.task.pressed {
    border-color: #444 #fff #fff #444;
    box-shadow: inset 1px 1px 0 #888;
    background: #eae8e4;
    font-size: 12px;
    font-weight: bold;
}
.pressed .arrow {
    margin-left: auto;
}
.grip {
    width: 2px;
    height: 20px;
    margin: 0 1px 0 5px;
    border-left: 1px solid #fff;
    border-right: 1px solid #999;
}
.ime {
    display: flex;
    align-items: center;
    gap: 6px;
    height: 24px;
    padding: 0 5px 0 3px;
    border-right: 1px solid #888;
}
.grip + .ime {
    margin-left: 5px;
}
.mode {
    width: 16px;
    font-size: 15px;
    line-height: 20px;
}
.keys {
    display: grid;
    gap: 1px;
    width: 24px;
    font-size: 8px;
    line-height: 10px;
}
.imemenu {
    display: grid;
    gap: 6px;
}
.tray {
    display: flex;
    align-items: center;
    gap: 2px;
    flex: 1;
    min-width: 0;
    height: 24px;
    margin-left: 4px;
    padding-left: 2px;
    border: 1px solid;
    border-color: #888 #fff #fff #888;
    border-right: 0;
    overflow: hidden;
}
```
